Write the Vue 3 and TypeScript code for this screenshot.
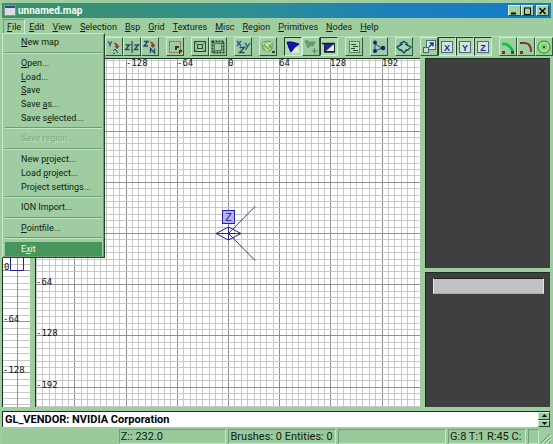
<script setup lang="ts">
import { computed, onBeforeUnmount, onMounted, reactive, ref } from 'vue'

interface Label {
  before: string
  key: string
  after: string
}

interface MenuEntry {
  text?: string
  disabled?: boolean
  active?: boolean
}

interface Tool {
  icon: string
  name: string
  pressed?: boolean
}

// An ampersand marks the mnemonic letter that follows it.
function parse(text: string): Label {
  const at = text.indexOf('&')
  if (at < 0) return { before: text, key: '', after: '' }
  return { before: text.slice(0, at), key: text[at + 1], after: text.slice(at + 2) }
}

const menus = [
  '&File', '&Edit', '&View', '&Selection', '&Bsp', '&Grid', '&Textures',
  '&Misc', '&Region', '&Primitives', '&Nodes', '&Help',
].map(parse)

const openMenu = ref(0)

const fileMenu: MenuEntry[] = [
  { text: '&New map' },
  {},
  { text: '&Open...' },
  { text: '&Load...' },
  { text: '&Save' },
  { text: 'Save &as...' },
  { text: 'Save s&elected...' },
  {},
  { text: 'Save region...', disabled: true },
  {},
  { text: 'New p&roject...' },
  { text: 'Load &project...' },
  { text: 'Pro&ject settings...' },
  {},
  { text: 'ION Import...' },
  {},
  { text: '&Pointfile...' },
  {},
  { text: 'E&xit', active: true },
]
const fileEntries = fileMenu.map((e) => ({ ...e, label: e.text ? parse(e.text) : null }))

const tools: Tool[][] = [
  [
    { icon: 'yrot', name: 'Rotate Y' },
    { icon: 'zflip', name: 'Flip Z' },
    { icon: 'zrot', name: 'Rotate Z' },
  ],
  [{ icon: 'touch', name: 'Select touching' }],
  [
    { icon: 'hollow', name: 'Hollow' },
    { icon: 'merge', name: 'Merge' },
  ],
  [{ icon: 'views', name: 'Change views' }],
  [{ icon: 'texture', name: 'Texture view' }],
  [
    { icon: 'cubic', name: 'Cubic clip', pressed: true },
    { icon: 'addpoint', name: 'Add point' },
    { icon: 'clipper', name: 'Clipper', pressed: true },
  ],
  [{ icon: 'entity', name: 'Entity list' }],
  [{ icon: 'nodes', name: 'Connect nodes' }],
  [{ icon: 'rotate', name: 'Free rotation' }],
  [
    { icon: 'scale', name: 'Free scaling' },
    { icon: 'X', name: 'Scale X', pressed: true },
    { icon: 'Y', name: 'Scale Y', pressed: true },
    { icon: 'Z', name: 'Scale Z', pressed: true },
  ],
  [
    { icon: 'patch', name: 'Patch' },
    { icon: 'curve', name: 'Curve' },
    { icon: 'circle', name: 'Circle' },
  ],
]

// One major cell of 64 units spans 51.2 px; it holds eight minor cells.
const major = 51.2
const minor = major / 8
const origin = { x: 192, y: 174 }
const zOrigin = 211

// The grid and its coordinates are drawn only as far as the pane reaches.
const pane = ref<HTMLElement | null>(null)
const size = reactive({ width: 0, height: 0 })
let observer: ResizeObserver | undefined
function measure() {
  if (!pane.value) return
  size.width = pane.value.clientWidth
  size.height = pane.value.clientHeight
}
onMounted(() => {
  measure()
  observer = new ResizeObserver(measure)
  if (pane.value) observer.observe(pane.value)
})
onBeforeUnmount(() => observer?.disconnect())

function lines(start: number, extent: number) {
  const out: { at: number; strong: boolean }[] = []
  for (let n = Math.ceil(-start / minor); start + n * minor < extent; n++) {
    out.push({ at: Math.round(start + n * minor) + 0.5, strong: n % 8 === 0 })
  }
  return out
}
function coords(start: number, first: number, limit: number, sign: number) {
  const out: { at: number; value: number }[] = []
  for (let n = first; start + n * major < limit; n++) {
    out.push({ at: Math.round(start + n * major), value: n * 64 * sign || 0 })
  }
  return out
}
const columns = computed(() => lines(origin.x, size.width))
const rows = computed(() => lines(origin.y, size.height))
const zRows = computed(() => lines(zOrigin, size.height))
const xLabels = computed(() => coords(origin.x, -2, size.width - 26, 1))
const yLabels = computed(() => coords(origin.y, 1, size.height - 6, -1))
const zLabels = computed(() => coords(zOrigin, 1, size.height - 6, -1))
</script>

<template>
  <div class="window">
    <header class="title">
      <svg class="app-icon" width="12" height="11" viewBox="0 0 12 11">
        <rect x="0.5" y="0.5" width="11" height="10" fill="#d9dde0" stroke="#8393a0" />
        <rect x="1" y="1" width="10" height="2" fill="#3346a4" />
      </svg>
      <h1>unnamed.map</h1>
      <button class="caption" type="button" aria-label="Minimize">
        <svg width="9" height="8"><path d="M1 6.500h5" stroke="#000" stroke-width="2" /></svg>
      </button>
      <button class="caption" type="button" aria-label="Maximize">
        <svg width="9" height="8"><path d="M1 1h7M1.500 1v6.500h6V1" fill="none" stroke="#000" /></svg>
      </button>
      <button class="caption close" type="button" aria-label="Close">
        <svg width="9" height="8"><path d="M1.500 1l6 6M7.500 1l-6 6" stroke="#000" stroke-width="1.400" /></svg>
      </button>
    </header>

    <nav class="menubar">
      <div v-for="(m, i) in menus" :key="i" class="menu-root">
        <button type="button" :class="{ open: openMenu === i }" @click="openMenu = i">
          {{ m.before }}<u>{{ m.key }}</u>{{ m.after }}
        </button>
        <div v-if="i === 0 && openMenu === 0" class="dropdown" role="menu">
          <template v-for="(e, j) in fileEntries" :key="j">
            <button
              v-if="e.label"
              type="button"
              role="menuitem"
              :disabled="e.disabled"
              :class="{ active: e.active }"
            >{{ e.label.before }}<u>{{ e.label.key }}</u>{{ e.label.after }}</button>
            <hr v-else />
          </template>
        </div>
      </div>
    </nav>

    <div class="toolbar" role="toolbar">
      <div v-for="(group, g) in tools" :key="g" class="group">
        <button
          v-for="t in group"
          :key="t.icon"
          type="button"
          :aria-label="t.name"
          :aria-pressed="!!t.pressed"
          :class="{ pressed: t.pressed }"
        >
          <svg width="16" height="16" viewBox="0 0 16 16" fill="none">
            <template v-if="t.icon === 'yrot'">
              <path d="M2 2.500l2 2.500 2-2.500M4 5v2.500" stroke="#1c4676" stroke-width="1.200" />
              <path d="M7 12l2-2 2 2M9 10l3 4M9 14l-2 1" stroke="#1b4a70" />
              <path d="M8 4l3 1v3M9 7h4l-2 2.500z" stroke="#a03a2c" fill="#a03a2c" />
            </template>
            <template v-else-if="t.icon === 'zflip'">
              <path d="M1.500 6h4l-4 4.500h4M10.500 6h4l-4 4.500h4" stroke="#1c4676" stroke-width="1.300" />
              <path d="M8 2v12" stroke="#222" />
            </template>
            <template v-else-if="t.icon === 'zrot'">
              <path d="M2 2.500h4L2 7h4" stroke="#1c4676" stroke-width="1.300" />
              <path d="M8 3l3 1v3M9 6h4l-2 2.500z" stroke="#a03a2c" fill="#a03a2c" />
              <path d="M8.500 14V9.500l4 4.500V9.500" stroke="#1c4676" stroke-width="1.300" />
            </template>
            <template v-else-if="t.icon === 'touch'">
              <rect x="2.500" y="2.500" width="11" height="11" stroke="#9c4a32" stroke-dasharray="2 1" />
              <path d="M8 7h4v2h-2v2H8z" fill="#24442c" />
              <path d="M12 11h3v2h-2v2h-1z" fill="#24442c" />
            </template>
            <template v-else-if="t.icon === 'hollow'">
              <rect x="2.500" y="2.500" width="11" height="10" stroke="#264430" />
              <rect x="5.500" y="5.500" width="5" height="4" stroke="#264430" />
              <path d="M2.500 2.500l3 3M13.500 2.500l-3 3M2.500 12.500l3-3M13.500 12.500l-3-3" stroke="#5c8565" />
            </template>
            <template v-else-if="t.icon === 'merge'">
              <rect x="2.500" y="2.500" width="11" height="11" stroke="#1f3f28" stroke-width="2" stroke-dasharray="2 1" />
              <rect x="4.500" y="4.500" width="7" height="7" stroke="#55795d" />
            </template>
            <template v-else-if="t.icon === 'views'">
              <path d="M2 2l4 5M6 2L2 7" stroke="#24599b" stroke-width="1.300" />
              <path d="M10 4l2.500 3.500M15 4l-4.500 7" stroke="#24599b" stroke-width="1.300" />
              <path d="M4.500 8.500h5l-5 5h5" stroke="#2a4560" stroke-width="1.300" />
            </template>
            <template v-else-if="t.icon === 'texture'">
              <path d="M2 4l5-2 5 1v7l-5 3-4-3z" fill="#a6cf72" stroke="#5b9465" />
              <path d="M2 4l5 2 5-3M7 6v7" stroke="#e2f2be" />
              <path d="M4 5l4 5M9 6l2 3" stroke="#478256" />
              <path d="M12 12h3v2h-3z" fill="#244c2d" />
            </template>
            <template v-else-if="t.icon === 'cubic'">
              <path d="M7 8h7v6H7z" fill="#dcebdc" />
              <path d="M2 3h5l7 2-4 3-4 5-2-4z" fill="#1014b8" stroke="#090b78" />
            </template>
            <template v-else-if="t.icon === 'addpoint'">
              <path d="M2 2h3l2 3 1-2h4l-2 4-2-1-3 3-1-3z" fill="#6da57b" stroke="#568d64" />
              <path d="M11.500 9v6M8.500 12h6" stroke="#4c8a5b" />
            </template>
            <template v-else-if="t.icon === 'clipper'">
              <rect x="3.500" y="4.500" width="10" height="8" fill="#1a2ca2" stroke="#16202c" />
              <path d="M5 12l8-7v7z" fill="#e3efe3" />
              <path d="M1 4.500h13M3 13h11" stroke="#151f20" stroke-width="1.500" />
            </template>
            <template v-else-if="t.icon === 'entity'">
              <rect x="3.500" y="2.500" width="10" height="11" fill="#b9dcb9" stroke="#5d8466" />
              <path d="M5 5.500h5M7 7.500h5M5 9.500h4M7 11.500h5" stroke="#2a4532" />
            </template>
            <template v-else-if="t.icon === 'nodes'">
              <path d="M4 4v8M4 5l7 4-7 3" stroke="#176078" />
              <circle cx="4" cy="3.500" r="2" fill="#12228f" />
              <circle cx="4" cy="12" r="2" fill="#12228f" />
              <circle cx="12" cy="9" r="2.300" fill="#12228f" />
            </template>
            <template v-else-if="t.icon === 'rotate'">
              <path d="M8 2.500l3 2v1.500l4 2-3 3h-1.500L8 14l-3-3H3.500L1 8l3.500-2V4.500z" fill="#a9d3b0" stroke="#185468" stroke-width="1.500" />
              <path d="M4.500 6l2.500-1M11 6l-2-1M4.500 10.500l2 1M11 10.500l-2 1" stroke="#0f3a4c" />
            </template>
            <template v-else-if="t.icon === 'scale'">
              <rect x="5.500" y="1.500" width="9" height="9" fill="#e1efe1" stroke="#496b66" />
              <rect x="2.500" y="8.500" width="5" height="5" fill="#c4dfca" stroke="#496b66" />
              <path d="M8 8l4-4M8.500 4H12v3.500" stroke="#1a35a0" stroke-width="1.500" />
            </template>
            <template v-else-if="t.icon.length === 1">
              <rect x="2.500" y="2.500" width="11" height="11" fill="#d2e4dc" stroke="#4c6c75" />
              <text x="8" y="11.500" text-anchor="middle" class="axis">{{ t.icon }}</text>
            </template>
            <template v-else-if="t.icon === 'patch'">
              <path d="M2 5c6-1 8 2 11 7" stroke="#12b53c" stroke-width="3" />
              <path d="M2 4c5-1 9 2 12 7" stroke="#65de78" />
              <path d="M2 12h3v3H2zM11 12h3v3h-3z" fill="#842c1b" />
            </template>
            <template v-else-if="t.icon === 'curve'">
              <path d="M2 4h5c4 0 6 3 6 9" stroke="#8a2f1c" stroke-width="2" />
              <path d="M2 12h3v3H2z" fill="#842c1b" />
            </template>
            <template v-else>
              <circle cx="8" cy="8" r="6" fill="#a5e59a" stroke="#3fae4a" stroke-width="1.500" />
              <circle cx="8" cy="8" r="3" stroke="#74cb74" />
              <circle cx="8" cy="8" r="1.500" fill="#8a3a22" />
            </template>
          </svg>
        </button>
      </div>
    </div>

    <main class="panes">
      <section class="view z-view">
        <svg width="100%" height="100%">
          <line v-for="(r, i) in zRows" :key="i" x1="0" x2="100%" :y1="r.at" :y2="r.at" :class="r.strong ? 'strong' : 'fine'" />
          <line x1="14.5" x2="14.5" y1="0" y2="100%" class="strong" />
          <path d="M7.500 170v41.500h13V170" class="blue" />
          <text x="1" :y="zOrigin" class="coord">0</text>
          <text v-for="l in zLabels" :key="l.value" x="0" :y="l.at + 1" class="coord">{{ l.value }}</text>
        </svg>
      </section>
      <section ref="pane" class="view xy-view">
        <svg width="100%" height="100%">
          <line v-for="(c, i) in columns" :key="'c' + i" :x1="c.at" :x2="c.at" y1="0" y2="100%" :class="c.strong ? 'strong' : 'fine'" />
          <line v-for="(r, i) in rows" :key="'r' + i" x1="0" x2="100%" :y1="r.at" :y2="r.at" :class="r.strong ? 'strong' : 'fine'" />
          <text v-for="l in xLabels" :key="'x' + l.value" :x="l.at" y="7" class="coord">{{ l.value }}</text>
          <text v-for="l in yLabels" :key="'y' + l.value" x="0" :y="l.at + 1" class="coord">{{ l.value }}</text>
          <path d="M192.500 174.500L219 147.500M192.500 174.500L219 201.500" class="ray" />
          <path d="M180 174.500l12.500-6.500 12.500 6.500-12.500 6.500zM180 174.500h25M192.500 168v13" class="blue" />
          <rect x="186.500" y="151.500" width="12" height="13" class="badge" />
          <text x="192.500" y="162" text-anchor="middle" class="badge-text">Z</text>
        </svg>
      </section>
      <div class="side">
        <section class="dark camera"></section>
        <section class="dark textures">
          <input type="text" aria-label="Texture filter" />
        </section>
      </div>
    </main>

    <section class="console">
      <output>GL_VENDOR: NVIDIA Corporation</output>
      <div class="spinner">
        <button type="button" aria-label="Scroll up"><svg width="5" height="3"><path d="M0 3l2.500-3L5 3z" /></svg></button>
        <button type="button" aria-label="Scroll down"><svg width="5" height="3"><path d="M0 0l2.500 3L5 0z" /></svg></button>
      </div>
    </section>

    <footer class="status">
      <span class="cell blank"></span>
      <span class="cell">Z:: 232.0</span>
      <span class="cell">Brushes: 0 Entities: 0</span>
      <span class="cell"></span>
      <span class="cell info">G:8 T:1 R:45 C:</span>
      <span class="cell end"></span>
      <svg class="grip" width="10" height="12" viewBox="0 0 10 12">
        <path d="M0 11L9 2M4 11l5-5M8 11l1-1" stroke="#64966c" />
        <path d="M1 12l9-9M5 12l5-5" stroke="#d3edd3" />
      </svg>
    </footer>
  </div>
</template>

<style>
body {
  background: #9fcda1;
}
</style>

<style scoped>
.window {
  box-sizing: border-box;
  min-height: 100vh;
  padding: 3px 2px 0;
  display: flex;
  flex-direction: column;
  background: #9fcda1;
  color: #10200f;
  font: 9px/14px Roboto, "Liberation Sans", sans-serif;
}
button {
  font: inherit;
  color: inherit;
  margin: 0;
  border: 0;
  padding: 0;
  background: none;
}
svg {
  display: block;
}

.title {
  display: flex;
  align-items: center;
  height: 15px;
  padding: 0 2px;
  background: linear-gradient(90deg, #3f9068, #2f8f92 45%, #1c80bb 70%, #137bcb);
}
.title h1 {
  flex: 1;
  margin: 0 0 0 2px;
  color: #f4fff4;
  font: bold 10px/15px Roboto, "Liberation Sans", sans-serif;
}
.caption {
  width: 13px;
  height: 11px;
  display: grid;
  place-items: center;
  background: #a2cfa4;
  border: 1px solid;
  border-color: #dcf4dc #2d5034 #2d5034 #dcf4dc;
}
.close {
  margin-left: 2px;
}

.menubar {
  display: flex;
  position: relative;
  padding: 1px 0 1px 1px;
}
.menu-root > button {
  padding: 0 3px;
  height: 16px;
  border: 1px solid transparent;
  white-space: nowrap;
}
.menu-root > .open {
  border-color: #6f9e75 #d3edd3 #d3edd3 #6f9e75;
}
.dropdown {
  position: absolute;
  left: 0;
  top: 15px;
  z-index: 2;
  box-sizing: border-box;
  width: 103px;
  min-height: 225px;
  padding: 2px 2px 1px;
  display: flex;
  flex-direction: column;
  background: #9fcda1;
  border: 1px solid;
  border-color: #c6e8c6 #23422b #23422b #c6e8c6;
  box-shadow: inset -1px -1px #6f9e75;
}
.dropdown button {
  flex: 1;
  padding: 0 0 0 16px;
  text-align: left;
  line-height: 13px;
}
.dropdown button:disabled {
  color: #79a97f;
  text-shadow: 1px 1px #bfe2bf;
}
.dropdown .active {
  background: #46955b;
  color: #e9ffe9;
}
.dropdown hr {
  width: 100%;
  margin: 2px 0 3px;
  border: 0;
  border-top: 1px solid #6d9c74;
  border-bottom: 1px solid #c6e8c6;
}

.toolbar {
  display: flex;
  gap: 7px;
  margin-right: -2px;
  padding: 0 0 2px 103px;
  overflow: hidden;
  border-top: 1px solid #b9dfba;
}
.group {
  display: flex;
  flex: none;
}
.group button {
  box-sizing: border-box;
  width: 18px;
  height: 19px;
  border: 1px solid;
  border-color: #d0ecd0 #2f5838 #2f5838 #d0ecd0;
}
.group .pressed {
  border-color: #1f3f27 #d0ecd0 #d0ecd0 #1f3f27;
  background: #b0d8b2;
}
.axis {
  font: bold 9px "Liberation Sans", sans-serif;
  fill: #1c27a4;
}

.panes {
  flex: 1;
  display: flex;
  gap: 5px;
  min-height: 300px;
  padding-right: 1px;
}
.view {
  position: relative;
  background: #fff;
  border-left: 1px solid #173320;
  border-top: 1px solid #173320;
}
.view svg {
  position: absolute;
  inset: 0;
}
.z-view {
  flex: 0 0 27px;
}
.xy-view {
  flex: 1;
}
.fine {
  stroke: #c8c8c8;
}
.strong {
  stroke: #909090;
}
.coord {
  font: 9px "DejaVu Sans Mono", monospace;
  fill: #111;
}
.blue {
  fill: none;
  stroke: #23239d;
}
.ray {
  stroke: #3a3a8c;
}
.badge {
  fill: #b3b3f4;
  stroke: #23239d;
}
.badge-text {
  font: 11px "Liberation Sans", sans-serif;
  fill: #23239d;
}
.side {
  flex: 0 0 125px;
  display: grid;
  grid-template-rows: 210fr 135fr;
  gap: 4px;
}
.dark {
  background: #3f3f3f;
  border-left: 1px solid #173320;
  border-top: 1px solid #173320;
}
.textures {
  padding: 5px 6px 0 7px;
}
.textures input {
  box-sizing: border-box;
  display: block;
  width: 100%;
  height: 16px;
  padding: 0;
  background: #bfc3c1;
  border: 1px solid;
  border-color: #222 #e6e6e6 #a8aca9 #e6e6e6;
  border-radius: 0;
}

.console {
  display: flex;
  margin: 4px 1px 0 0;
  height: 15px;
  background: #fff;
  border-top: 1px solid #173320;
  border-left: 1px solid #173320;
  color: #000;
  font: bold 11px/15px Roboto, "Liberation Sans", sans-serif;
}
.console output {
  flex: 1;
  padding-left: 2px;
}
.spinner {
  width: 12px;
  display: flex;
  flex-direction: column;
}
.spinner button {
  flex: 1;
  display: grid;
  place-items: center;
  background: #9fcda1;
  border: 1px solid;
  border-color: #d0ecd0 #23422b #23422b #d0ecd0;
}

.status {
  display: flex;
  align-items: flex-end;
  gap: 2px;
  padding-top: 2px;
  font: 11px/13px Roboto, "Liberation Sans", sans-serif;
}
.cell {
  box-sizing: border-box;
  flex: 1 1 108px;
  height: 15px;
  padding-left: 1px;
  border: 1px solid;
  border-color: #6f9e75 #c6e8c6 #c6e8c6 #6f9e75;
  background: #98ca9c;
  white-space: nowrap;
}
.blank {
  flex-basis: 115px;
  border-color: transparent;
}
.info {
  flex: 0 0 78px;
}
.end {
  flex: 0 0 11px;
}
.grip {
  flex: none;
}
</style>
